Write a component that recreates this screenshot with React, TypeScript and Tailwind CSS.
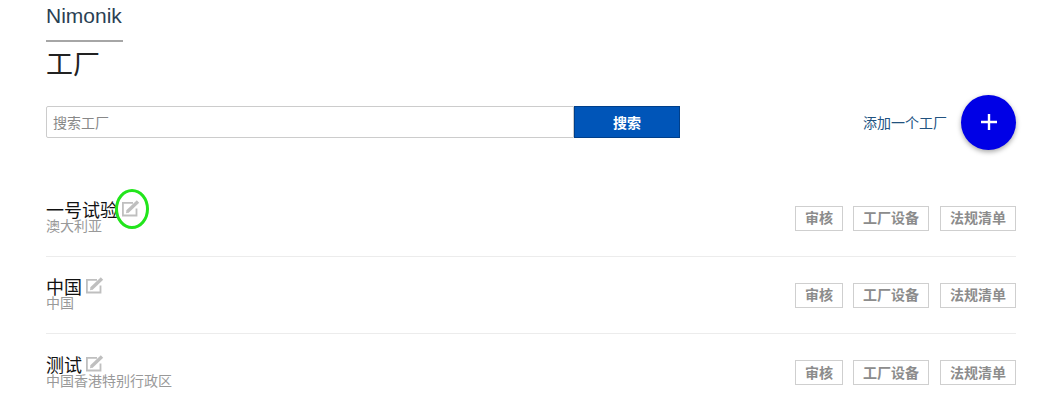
import { FC } from "react";

const FONT = "font-['Open_Sans','Noto_Sans_CJK_SC',sans-serif]";

type Factory = {
  name: string;
  country: string;
  circled?: boolean;
};

const factories: Factory[] = [
  { name: "一号试验", country: "澳大利亚", circled: true },
  { name: "中国", country: "中国" },
  { name: "测试", country: "中国香港特别行政区" },
];

const EditIcon: FC = () => (
  <svg width="18" height="17" viewBox="0 0 18 17" fill="none" className="-mt-[3px] block">
    <path d="M11 2.800H0.900V15.500H14.500V8.500" stroke="#bfbfbf" strokeWidth="1.800" />
    <path d="M5.500 11.500 16 1.500" stroke="#bfbfbf" strokeWidth="3.400" />
    <path d="M4 13.200 4.500 10 7.200 12.600Z" fill="#bfbfbf" />
  </svg>
);

const ActionButton: FC<{ label: string; width: string }> = ({ label, width }) => (
  <button className={`h-[25px] ${width} border border-[#cfcfcf] bg-white text-[14px] font-bold text-[#8c8c8c] leading-none`}>
    {label}
  </button>
);

const FactoryRow: FC<{ factory: Factory; last: boolean }> = ({ factory, last }) => (
  <div className={`flex h-[77px] items-center justify-between ${last ? "" : "border-b border-[#ececec]"}`}>
    <div className="flex flex-col">
      <div className="relative flex h-[16px] items-center gap-[4px] text-[18px] leading-[16px] text-[#111111]">
        <span>{factory.name}</span>
        <EditIcon />
        {factory.circled && (
          <div className="absolute left-[69px] top-[-13px] h-[40px] w-[34px] rounded-[50%] border-[3px] border-[#22e51c]" />
        )}
      </div>
      <span className="h-[16px] text-[14px] leading-[16px] text-[#999999]">{factory.country}</span>
    </div>
    <div className="flex">
      <ActionButton label="审核" width="w-[48px]" />
      <div className="w-[10px]" />
      <ActionButton label="工厂设备" width="w-[76px]" />
      <div className="w-[11px]" />
      <ActionButton label="法规清单" width="w-[76px]" />
    </div>
  </div>
);

const App: FC = () => {
  return (
    <div className={`h-[404px] w-[1048px] overflow-hidden bg-white pl-[46px] pr-[32px] ${FONT}`}>
      <div className="h-[40px] pt-[4px] font-['Liberation_Sans',sans-serif] text-[21px] leading-[24px] text-[#2a3f54]">Nimonik</div>
      <div className="h-[2px] w-[77px] bg-[#a6a6a6]" />
      <h1 className="mt-[3px] h-[38px] text-[27px] leading-[38px] text-[#222222]">工厂</h1>
      <div className="mt-[11px] flex h-[56px] items-center justify-between">
        <div className="flex h-[32px] w-[634px]">
          <input
            placeholder="搜索工厂"
            className="h-[32px] w-[528px] rounded-l-[2px] border border-[#cccccc] px-[6px] text-[14px] placeholder:text-[#888888]"
          />
          <button className="h-[32px] w-[106px] border border-[#003f8a] bg-[#0055b8] text-[14px] font-bold text-white">
            搜索
          </button>
        </div>
        <div className="flex items-center gap-[14px]">
          <a className="text-[14px] text-[#21527f]">添加一个工厂</a>
          <button className="flex h-[55px] w-[55px] items-center justify-center rounded-full bg-[#0000e6] shadow-[0_2px_5px_rgba(0,0,0,0.35)]">
            <svg width="18" height="18" viewBox="0 0 18 18" className="-mt-[1px]">
              <path d="M9 1v16M1 9h16" stroke="white" strokeWidth="2.400" />
            </svg>
          </button>
        </div>
      </div>
      <div className="mt-[30px]">
        {factories.map((factory, i) => (
          <FactoryRow key={factory.name} factory={factory} last={i === factories.length - 1} />
        ))}
      </div>
    </div>
  );
};

export default App;
